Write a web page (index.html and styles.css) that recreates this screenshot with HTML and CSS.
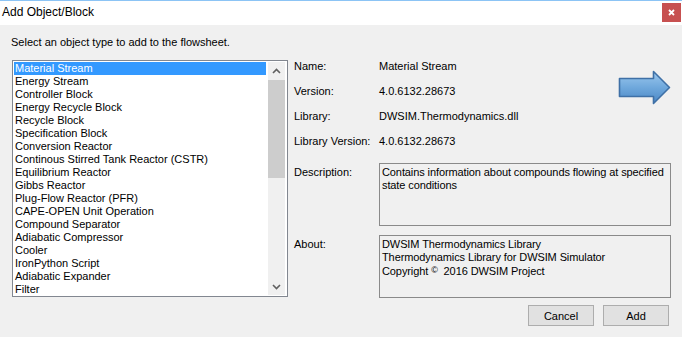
FILE: index.html
```html
<!DOCTYPE html>
<html lang="en">

<head>
<meta charset="utf-8">
<title>Add Object/Block</title>
<link rel="stylesheet" href="styles.css">
</head>

<body>

<div class="window">
  <div class="titlebar">
    <span class="title">Add Object/Block</span>
    <span class="close">
      <svg width="7" height="7" viewBox="0 0 7 7"><path d="M1 1L6 6M6 1L1 6" stroke="#fff" stroke-width="1.8"/></svg>
    </span>
  </div>

  <div class="prompt">Select an object type to add to the flowsheet.</div>

  <div class="main">
    <div class="listbox">
      <ul class="items">
        <li class="selected">Material Stream</li>
        <li>Energy Stream</li>
        <li>Controller Block</li>
        <li>Energy Recycle Block</li>
        <li>Recycle Block</li>
        <li>Specification Block</li>
        <li>Conversion Reactor</li>
        <li>Continous Stirred Tank Reactor (CSTR)</li>
        <li>Equilibrium Reactor</li>
        <li>Gibbs Reactor</li>
        <li>Plug-Flow Reactor (PFR)</li>
        <li>CAPE-OPEN Unit Operation</li>
        <li>Compound Separator</li>
        <li>Adiabatic Compressor</li>
        <li>Cooler</li>
        <li>IronPython Script</li>
        <li>Adiabatic Expander</li>
        <li>Filter</li>
      </ul>
      <div class="scrollbar">
        <div class="sb-btn">
          <svg width="9" height="6" viewBox="0 0 9 6"><path d="M1 5L4.5 1.5L8 5" fill="none" stroke="#606060" stroke-width="1.6"/></svg>
        </div>
        <div class="sb-thumb"></div>
        <div class="sb-track"></div>
        <div class="sb-btn">
          <svg width="9" height="6" viewBox="0 0 9 6"><path d="M1 1L4.5 4.5L8 1" fill="none" stroke="#606060" stroke-width="1.6"/></svg>
        </div>
      </div>
    </div>

    <div class="details">
      <div class="top">
        <div class="fields">
          <div class="field"><span class="label">Name:</span><span>Material Stream</span></div>
          <div class="field"><span class="label">Version:</span><span>4.0.6132.28673</span></div>
          <div class="field"><span class="label">Library:</span><span>DWSIM.Thermodynamics.dll</span></div>
          <div class="field"><span class="label">Library Version:</span><span>4.0.6132.28673</span></div>
        </div>
        <svg class="arrow" width="53" height="35" viewBox="0 0 53 35">
          <defs>
            <linearGradient id="blue" x1="0" y1="0" x2="0" y2="1">
              <stop offset="0" stop-color="#9cc8ee"/>
              <stop offset="0.5" stop-color="#6fa8dc"/>
              <stop offset="1" stop-color="#4a86c4"/>
            </linearGradient>
          </defs>
          <path d="M1.5 8.5H35.5V1.5L51.5 17.5L35.5 33.5V26.5H1.5Z" fill="url(#blue)" stroke="#3f70a6" stroke-width="1.6" stroke-linejoin="round"/>
        </svg>
      </div>

      <div class="textfield first">
        <span class="label">Description:</span>
        <div class="box">Contains information about compounds flowing at specified state conditions</div>
      </div>
      <div class="textfield">
        <span class="label">About:</span>
        <div class="box">DWSIM Thermodynamics Library<br>Thermodynamics Library for DWSIM Simulator<br>Copyright <span class="copy">&copy;</span>&nbsp; 2016 DWSIM Project</div>
      </div>
    </div>
  </div>

  <div class="buttons">
    <button>Cancel</button>
    <button>Add</button>
  </div>
</div>

</body>
</html>
```

FILE: styles.css
```css
html,body {
  margin: 0;
  background-color: #f0f0f0;
  color: #000;
  font-family: 'Liberation Sans', 'Arial', sans-serif;
  font-size: 11px;
}

.window {
  width: 682px;
  height: 337px;
  overflow: hidden;
}

.titlebar {
  height: 24px;
  border-top: 1px solid #8cc4f5;
  background: white;
  display: flex;
  justify-content: space-between;
}

.title {
  font-size: 12px;
  line-height: 22px;
  padding-left: 2px;
}

.close {
  width: 19px;
  height: 19px;
  margin-top: 2px;
  margin-right: 1px;
  background: #c75050;
  display: flex;
  align-items: center;
  justify-content: center;
}

.prompt {
  line-height: 13px;
  margin: 11px 0 11px 11px;
}

.main {
  display: flex;
  padding-left: 12px;
}

.listbox {
  width: 276px;
  height: 237px;
  box-sizing: border-box;
  border: 1px solid #828790;
  background: white;
  display: flex;
}

.items {
  list-style: none;
  margin: 0;
  padding: 1px 1px 0 1px;
  flex: 1;
  overflow: hidden;
}

.items li {
  height: 13px;
  line-height: 13px;
  padding-left: 1px;
  margin-right: 1px;
  white-space: nowrap;
}

.items li.selected {
  background: #3399ff;
  color: white;
}

.scrollbar {
  width: 17px;
  margin: 1px 2px 1px 0;
  background: #f0f0f0;
  display: flex;
  flex-direction: column;
}

.sb-btn {
  height: 17px;
  display: flex;
  align-items: center;
  justify-content: center;
}

.sb-thumb {
  height: 98px;
  margin: 1px 0;
  background: #cdcdcd;
}

.sb-track {
  flex: 1;
}

.details {
  width: 377px;
  margin-left: 6px;
}

.top {
  display: flex;
}

.fields {
  flex: 1;
}

.field {
  height: 25px;
  line-height: 13px;
  display: flex;
}

.label {
  width: 85px;
  flex: none;
}

.arrow {
  margin-top: 10px;
}

.textfield {
  display: flex;
  margin-top: 9px;
}

.textfield.first {
  margin-top: 3px;
}

.textfield .label {
  padding-top: 3px;
  line-height: 13px;
}

.box {
  width: 292px;
  height: 63px;
  box-sizing: border-box;
  border: 1px solid #8a8a8a;
  padding: 2px 0 0 2px;
  line-height: 13px;
  letter-spacing: -0.1px;
}

.copy {
  font-size: 9px;
  vertical-align: 2px;
}

.buttons {
  display: flex;
  justify-content: flex-end;
  gap: 9px;
  margin-top: 7px;
  padding-right: 13px;
}

.buttons button {
  width: 66px;
  height: 21px;
  border: 1px solid #adadad;
  background: #e1e1e1;
  font-family: 'Liberation Sans', 'Arial', sans-serif;
  font-size: 11px;
  color: #000;
  padding: 0;
}
```
